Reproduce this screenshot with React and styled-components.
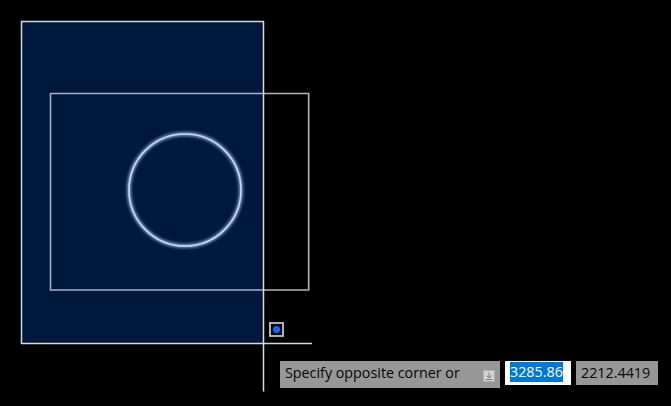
import React from 'react';
import styled, { createGlobalStyle } from 'styled-components';

const GlobalStyle = createGlobalStyle`
  html, body {
    margin: 0;
    padding: 0;
    background: #000000;
    overflow: hidden;
  }
`;

const Viewport = styled.div`
  position: relative;
  width: 671px;
  height: 406px;
  background: #000000;
  overflow: hidden;
`;

const Drawing = styled.svg`
  position: absolute;
  left: 0;
  top: 0;
  display: block;
`;

// dynamic input next to the crosshair, floats over the drawing
const DynamicInput = styled.div`
  position: absolute;
  left: 280px;
  top: 361px;
  display: flex;
  align-items: flex-start;
  gap: 5px;
  font-family: "Open Sans", "Noto Sans", sans-serif;
  font-size: 14.3px;
  color: #050505;
`;

const Prompt = styled.div`
  width: 220px;
  height: 27px;
  box-sizing: border-box;
  padding: 2px 0 0 5px;
  display: flex;
  justify-content: space-between;
  background: #979797;
  line-height: 19px;
  white-space: nowrap;
`;

const PromptArrow = styled.span`
  width: 12px;
  height: 12px;
  box-sizing: border-box;
  margin: 7px 5px 0 0;
  background: #d4d4d4;
  border: 1px solid #b0b0b0;
  display: flex;
  align-items: center;
  justify-content: center;
`;

const Field = styled.div`
  width: ${p => p.$width}px;
  height: 24px;
  box-sizing: border-box;
  padding: ${p => p.$active ? '1px 0 0 5px' : '2px 0 0 5px'};
  background: ${p => p.$active ? '#ffffff' : '#979797'};
  line-height: 19px;
  white-space: nowrap;
`;

const Selected = styled.span`
  display: inline-block;
  height: 20px;
  background: #0078d7;
  color: #ffffff;
`;

export default function App() {
  return (
    <Viewport>
      <GlobalStyle />
      <Drawing width="671" height="406" viewBox="0 0 671 406">
        <defs>
          <filter id="glow" x="-20%" y="-20%" width="140%" height="140%">
            <feGaussianBlur stdDeviation="1.5" />
          </filter>
        </defs>
        {/* selection window */}
        <rect x="21.5" y="21.5" width="242" height="322" fill="#00183c" />
        <path d="M21.5 344V21.5H264" fill="none" stroke="#d2d8e2" strokeWidth="1.5" />
        {/* square */}
        <path d="M264 93.5H50.5V290H264" fill="none" stroke="#a3b0c6" strokeWidth="1.6" />
        <path d="M264 93.5H308.7V290H264" fill="none" stroke="#b4b4b4" strokeWidth="1.6" />
        {/* circle */}
        <circle cx="185" cy="190" r="56" fill="none" stroke="#7f9cc8" strokeWidth="4" filter="url(#glow)" />
        <circle cx="185" cy="190" r="56" fill="none" stroke="#c8d8f0" strokeWidth="1.6" />
        {/* crosshair */}
        <path d="M21 343.5H312" stroke="#d8d8d8" strokeWidth="1.5" />
        <path d="M263.5 21V391.5" stroke="#dcdcdc" strokeWidth="1.5" />
        {/* snap marker */}
        <rect x="270" y="323" width="13" height="13" fill="#000000" stroke="#c4c4c4" strokeWidth="1.8" />
        <circle cx="276.5" cy="329.5" r="3.6" fill="#0a6cff" />
      </Drawing>
      <DynamicInput>
        <Prompt>
          Specify opposite corner or
          <PromptArrow>
            <svg width="10" height="10" viewBox="0 0 10 10">
              <path d="M5 1.5V6.5M2.5 4.5L5 7L7.5 4.5M1.5 8.5H8.5" fill="none" stroke="#7d7d7d" strokeWidth="1" />
            </svg>
          </PromptArrow>
        </Prompt>
        <Field $active $width={66}><Selected>3285.86</Selected></Field>
        <Field $width={82}>2212.4419</Field>
      </DynamicInput>
    </Viewport>
  );
}
